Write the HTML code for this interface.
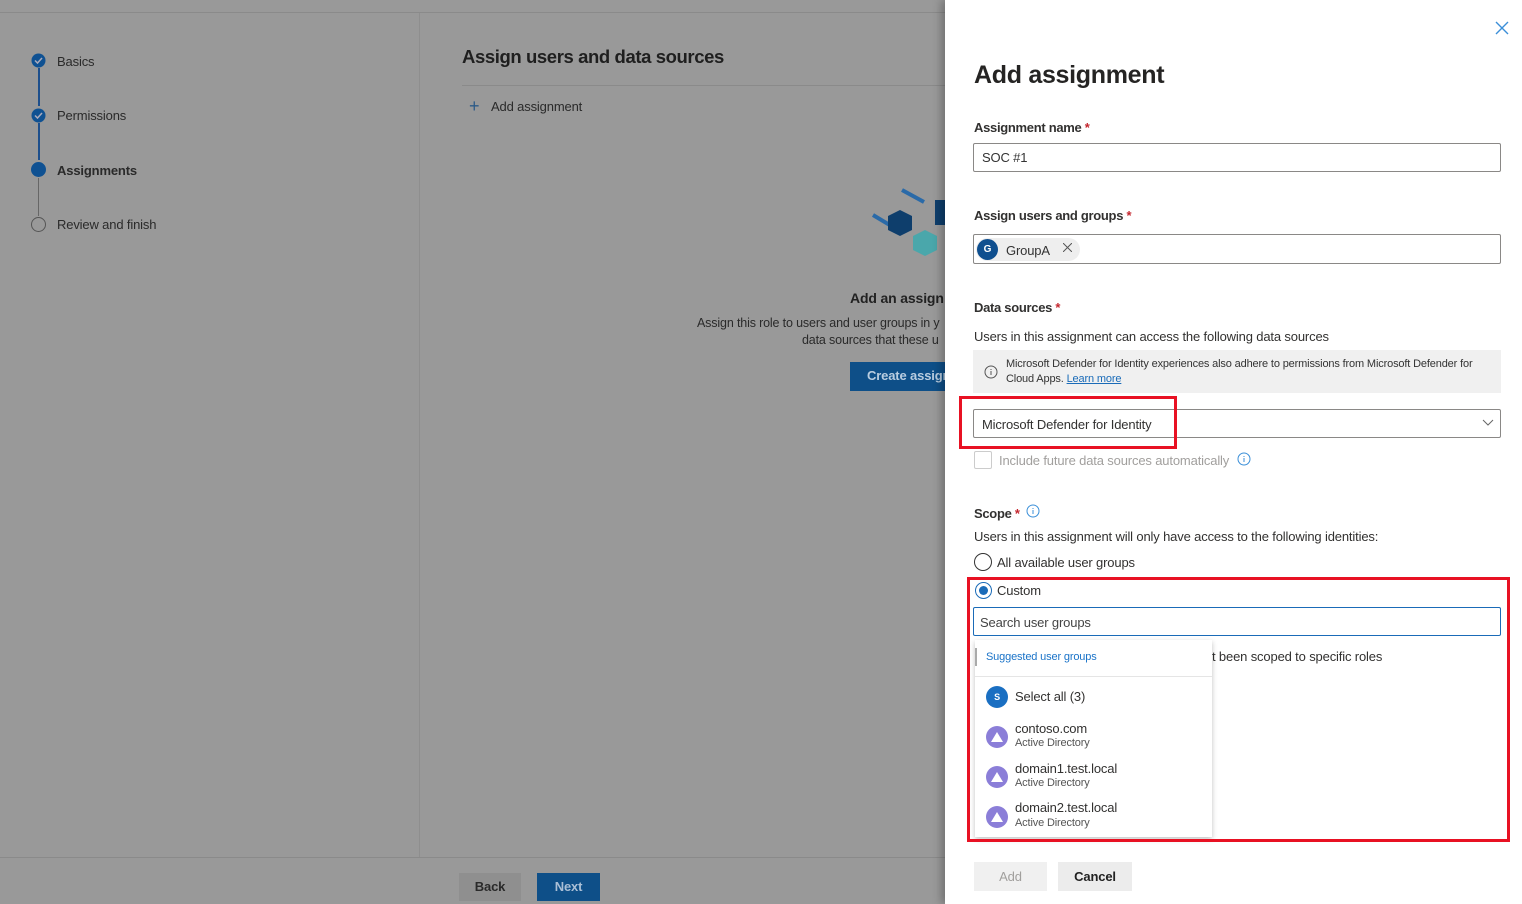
<!DOCTYPE html>
<html><head><meta charset="utf-8"><style>
*{margin:0;padding:0;box-sizing:border-box}
body{width:1522px;height:904px;overflow:hidden;position:relative;background:#999;font-family:"Liberation Sans",sans-serif;color:#222;font-size:13px;letter-spacing:-0.15px}
.a{position:absolute;white-space:nowrap}
.g{color:#2a2a2a}
.panel{position:absolute;left:945px;top:0;width:577px;height:904px;background:#fff;box-shadow:-4px 0 8px rgba(0,0,0,.25)}
.lbl{font-size:13px;color:#323130;font-weight:bold;letter-spacing:-.3px}
.req{color:#c4262e}
.inp{position:absolute;border:1px solid #8a8886;border-radius:2px;background:#fff}
.red{position:absolute;border:3px solid #e81123}
.av{position:absolute;width:22px;height:22px;border-radius:50%;background:#8b7ed8}
</style></head><body>
<div class="a" style="left:0;top:12px;width:945px;height:1px;background:#8a8a8a"></div>
<div class="a" style="left:419px;top:13px;width:1px;height:844px;background:#8e8e8e"></div>
<div class="a" style="left:0;top:857px;width:945px;height:1px;background:#8a8a8a"></div>
<div class="a" style="left:38px;top:68px;width:2px;height:38px;background:#1d4f8c"></div>
<div class="a" style="left:38px;top:123px;width:2px;height:37px;background:#1d4f8c"></div>
<div class="a" style="left:38px;top:178px;width:1px;height:38px;background:#666"></div>
<svg class="a" style="left:31px;top:53px" width="15" height="15"><circle cx="7.5" cy="7.5" r="7" fill="#0f5192"/><path d="M4 7.5l2.5 2.5 4.5-5" stroke="#aab" stroke-width="1.5" fill="none"/></svg>
<svg class="a" style="left:31px;top:108px" width="15" height="15"><circle cx="7.5" cy="7.5" r="7" fill="#0f5192"/><path d="M4 7.5l2.5 2.5 4.5-5" stroke="#aab" stroke-width="1.5" fill="none"/></svg>
<div class="a" style="left:31px;top:162px;width:15px;height:15px;border-radius:50%;background:#0f5192"></div>
<div class="a" style="left:31px;top:217px;width:15px;height:15px;border-radius:50%;border:1.5px solid #555"></div>
<div class="a g" style="left:57px;top:54px">Basics</div>
<div class="a g" style="left:57px;top:108px">Permissions</div>
<div class="a g" style="left:57px;top:163px;font-weight:bold">Assignments</div>
<div class="a g" style="left:57px;top:217px">Review and finish</div>
<div class="a" style="left:462px;top:46px;font-size:18.5px;font-weight:bold;color:#1f1f1f;letter-spacing:-.4px">Assign users and data sources</div>
<div class="a" style="left:462px;top:85px;width:483px;height:1px;background:#8a8a8a"></div>
<div class="a" style="left:469px;top:96px;font-size:18px;color:#2c5a88">+</div>
<div class="a g" style="left:491px;top:99px">Add assignment</div>
<svg class="a" style="left:870px;top:185px" width="75" height="80"><path d="M32 5l22 12" stroke="#2a6aa8" stroke-width="4"/><path d="M3 30l20 12" stroke="#2a6aa8" stroke-width="4"/><path d="M30 25l12 6v14l-12 6-12-6V31z" fill="#0e3e6c"/><path d="M55 60l12 6v14l-12 6-12-6V66z" fill="#4aa7ab" transform="translate(0,-15)"/><rect x="65" y="15" width="10" height="25" fill="#0e3e6c"/></svg>
<div class="a" style="left:850px;top:290px;font-weight:bold;font-size:14px;color:#222">Add an assign</div>
<div class="a g" style="left:697px;top:316px;font-size:12.5px">Assign this role to users and user groups in y</div>
<div class="a g" style="left:802px;top:333px;font-size:12.5px">data sources that these u</div>
<div class="a" style="left:850px;top:362px;width:100px;height:29px;background:#0e4f88;color:#b9cde0;font-weight:bold;padding:6px 0 0 17px">Create assign</div>
<div class="a" style="left:459px;top:873px;width:62px;height:28px;background:#8f8f8f;font-weight:bold;text-align:center;line-height:28px;color:#2a2a2a">Back</div>
<div class="a" style="left:537px;top:873px;width:63px;height:28px;background:#0e4f88;font-weight:bold;text-align:center;line-height:28px;color:#aabfd6">Next</div>

<div class="panel"></div>
<svg class="a" style="left:1495px;top:21px" width="14" height="14"><path d="M1 1l12 12M13 1L1 13" stroke="#3b8fd8" stroke-width="1.4"/></svg>
<div class="a" style="left:974px;top:61px;font-size:25px;font-weight:bold;color:#252423;letter-spacing:-.3px">Add assignment</div>
<div class="a lbl" style="left:974px;top:120px">Assignment name <span class="req">*</span></div>
<div class="inp" style="left:973px;top:143px;width:528px;height:29px"></div>
<div class="a" style="left:982px;top:150px;color:#333">SOC #1</div>
<div class="a lbl" style="left:974px;top:208px">Assign users and groups <span class="req">*</span></div>
<div class="inp" style="left:973px;top:234px;width:528px;height:30px"></div>
<div class="a" style="left:976px;top:238px;width:104px;height:23px;border-radius:12px;background:#eee"></div>
<div class="a" style="left:977px;top:239px;width:21px;height:21px;border-radius:50%;background:#0f4f8f;color:#fff;font-size:10px;font-weight:bold;text-align:center;line-height:21px">G</div>
<div class="a" style="left:1006px;top:243px;color:#333">GroupA</div>
<svg class="a" style="left:1063px;top:243px" width="9" height="9"><path d="M0 0l9 9M9 0L0 9" stroke="#555" stroke-width="1"/></svg>
<div class="a lbl" style="left:974px;top:300px">Data sources <span class="req">*</span></div>
<div class="a" style="left:974px;top:329px;color:#323130">Users in this assignment can access the following data sources</div>
<div class="a" style="left:973px;top:350px;width:528px;height:43px;background:#f0f0f0"></div>
<svg class="a" style="left:984px;top:365px" width="14" height="14"><circle cx="7" cy="7" r="6" stroke="#555" fill="none"/><path d="M7 6v4M7 4v1" stroke="#555"/></svg>
<div class="a" style="left:1006px;top:358px;font-size:11px;color:#333">Microsoft Defender for Identity experiences also adhere to permissions from Microsoft Defender for</div>
<div class="a" style="left:1006px;top:373px;font-size:11px;color:#333">Cloud Apps. <span style="color:#1a6bb8;text-decoration:underline">Learn more</span></div>
<div class="inp" style="left:973px;top:409px;width:528px;height:29px"></div>
<div class="a" style="left:982px;top:417px;color:#323130">Microsoft Defender for Identity</div>
<svg class="a" style="left:1482px;top:419px" width="12" height="8"><path d="M1 1l5 5 5-5" stroke="#666" fill="none"/></svg>
<div class="red" style="left:959px;top:396px;width:218px;height:53px"></div>
<div class="a" style="left:974px;top:451px;width:18px;height:18px;border:1px solid #ccc;border-radius:2px"></div>
<div class="a" style="left:999px;top:453px;color:#a19f9d">Include future data sources automatically</div>
<svg class="a" style="left:1237px;top:452px" width="14" height="14"><circle cx="7" cy="7" r="6" stroke="#3b8fd8" fill="none"/><path d="M7 6v4M7 4v1" stroke="#3b8fd8"/></svg>
<div class="a lbl" style="left:974px;top:506px">Scope <span class="req">*</span></div>
<svg class="a" style="left:1026px;top:504px" width="14" height="14"><circle cx="7" cy="7" r="6" stroke="#3b8fd8" fill="none"/><path d="M7 6v4M7 4v1" stroke="#3b8fd8"/></svg>
<div class="a" style="left:974px;top:529px;color:#323130">Users in this assignment will only have access to the following identities:</div>
<div class="a" style="left:974px;top:553px;width:18px;height:18px;border:1.5px solid #333;border-radius:50%"></div>
<div class="a" style="left:997px;top:555px;color:#323130">All available user groups</div>
<div class="a" style="left:975px;top:582px;width:17px;height:17px;border:1.5px solid #1a6bb8;border-radius:50%"></div>
<div class="a" style="left:979px;top:586px;width:9px;height:9px;background:#1a6bb8;border-radius:50%"></div>
<div class="a" style="left:997px;top:583px;color:#323130">Custom</div>
<div class="inp" style="left:973px;top:607px;width:528px;height:29px;border-color:#1a6bb8"></div>
<div class="a" style="left:980px;top:615px;color:#444">Search user groups</div>
<div class="a" style="left:1212px;top:649px;color:#323130">t been scoped to specific roles</div>
<div class="a" style="left:975px;top:640px;width:237px;height:197px;background:#fff;box-shadow:0 2px 5px rgba(0,0,0,.25)"></div>
<div class="a" style="left:975px;top:648px;width:2px;height:18px;background:#aaa"></div>
<div class="a" style="left:986px;top:651px;font-size:11px;color:#1a73c8">Suggested user groups</div>
<div class="a" style="left:975px;top:676px;width:237px;height:1px;background:#e5e5e5"></div>
<div class="a" style="left:986px;top:686px;width:22px;height:22px;border-radius:50%;background:#1a6fc2;color:#fff;font-size:9px;font-weight:bold;text-align:center;line-height:22px">S</div>
<div class="a" style="left:1015px;top:689px;color:#323130">Select all (3)</div>
<div class="av" style="left:986px;top:726px"></div><div class="av" style="left:986px;top:766px"></div><div class="av" style="left:986px;top:806px"></div>
<svg class="a" style="left:990px;top:731px" width="14" height="12"><path d="M7 1L1 11h12z" fill="#fff"/></svg>
<svg class="a" style="left:990px;top:771px" width="14" height="12"><path d="M7 1L1 11h12z" fill="#fff"/></svg>
<svg class="a" style="left:990px;top:811px" width="14" height="12"><path d="M7 1L1 11h12z" fill="#fff"/></svg>
<div class="a" style="left:1015px;top:721px;color:#323130">contoso.com</div>
<div class="a" style="left:1015px;top:737px;font-size:11px;color:#555">Active Directory</div>
<div class="a" style="left:1015px;top:761px;color:#323130">domain1.test.local</div>
<div class="a" style="left:1015px;top:777px;font-size:11px;color:#555">Active Directory</div>
<div class="a" style="left:1015px;top:800px;color:#323130">domain2.test.local</div>
<div class="a" style="left:1015px;top:817px;font-size:11px;color:#555">Active Directory</div>
<div class="red" style="left:967px;top:577px;width:543px;height:265px"></div>
<div class="a" style="left:974px;top:862px;width:73px;height:29px;background:#f0f0f0;color:#a19f9d;text-align:center;line-height:29px">Add</div>
<div class="a" style="left:1058px;top:862px;width:74px;height:29px;background:#ececec;color:#222;font-weight:bold;text-align:center;line-height:29px">Cancel</div>
</body></html>
